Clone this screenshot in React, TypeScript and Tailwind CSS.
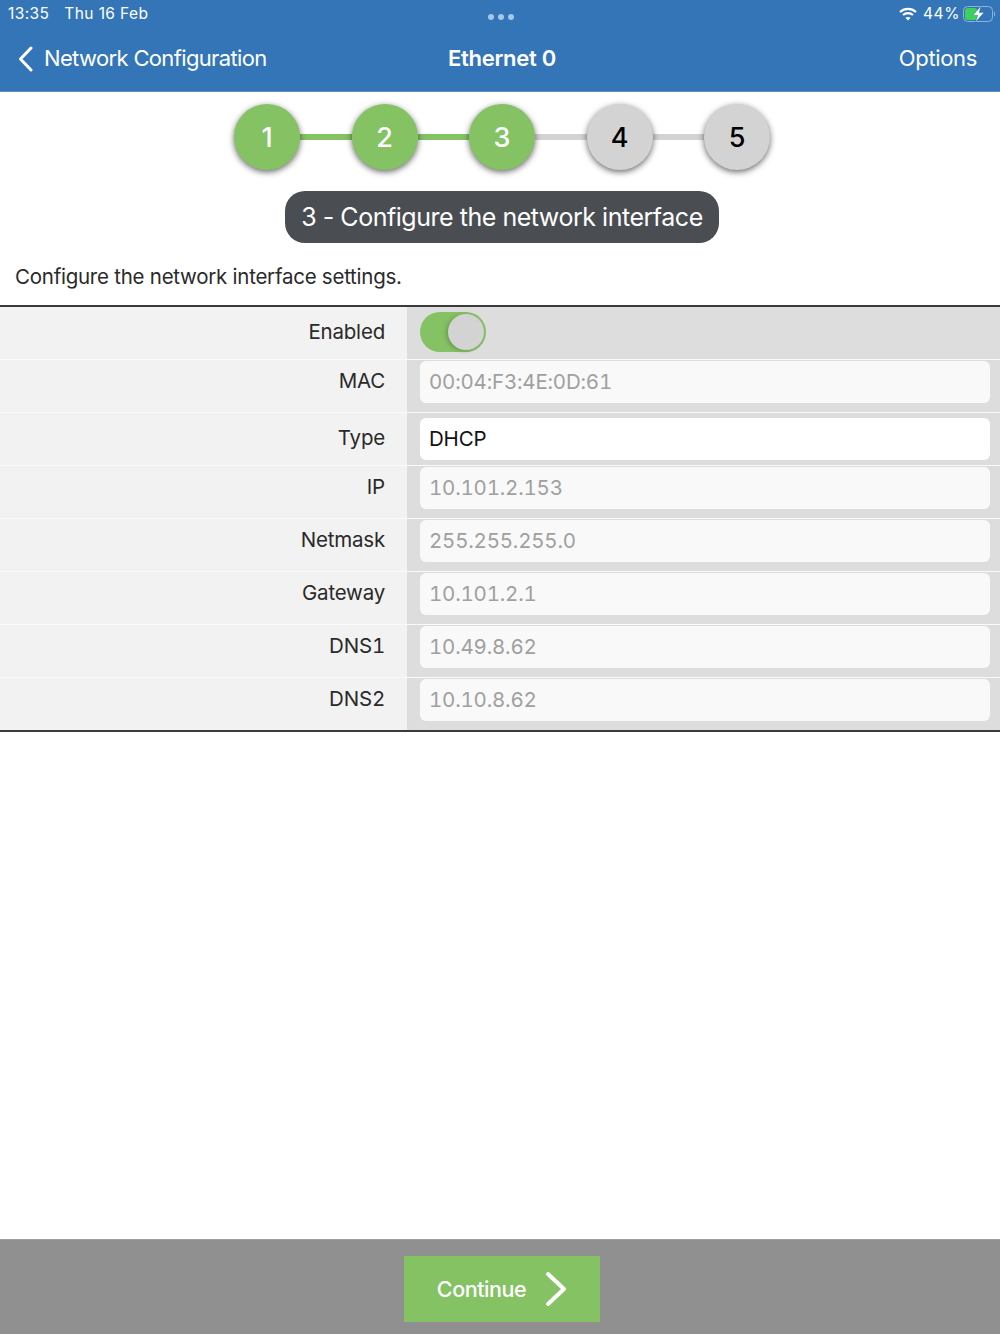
const steps = [
  { label: "1", done: true },
  { label: "2", done: true },
  { label: "3", done: true },
  { label: "4", done: false },
  { label: "5", done: false },
]

const rows = [
  { label: "MAC", value: "00:04:F3:4E:0D:61" },
  { label: "Type", value: "DHCP", editable: true },
  { label: "IP", value: "10.101.2.153" },
  { label: "Netmask", value: "255.255.255.0" },
  { label: "Gateway", value: "10.101.2.1" },
  { label: "DNS1", value: "10.49.8.62" },
  { label: "DNS2", value: "10.10.8.62" },
]

const StatusBar = () => (
  <div className="relative h-[27px] text-white">
    <div className="flex items-center pl-[8px] pt-[4px] text-[15.5px] leading-[20px] tracking-[0.4px]">
      <span>13:35</span>
      <span className="ml-[15px]">Thu 16 Feb</span>
    </div>
    <div className="absolute left-[488px] top-[14px] flex gap-[4px]">
      <span className="h-[6px] w-[6px] rounded-full bg-[#a4c8ec]" />
      <span className="h-[6px] w-[6px] rounded-full bg-[#a4c8ec]" />
      <span className="h-[6px] w-[6px] rounded-full bg-[#a4c8ec]" />
    </div>
    <div className="absolute right-[4px] top-[4px] flex items-center">
      <svg width="18" height="14" viewBox="0 0 18 14" fill="none" stroke="white" strokeWidth="2.2">
        <path d="M1 5 C5.5 0.8 12.5 0.8 17 5" />
        <path d="M4 8 C6.8 5.6 11.2 5.6 14 8" />
        <path d="M9 13.6 L6.4 10.8 C8 9.6 10 9.6 11.6 10.8 Z" fill="white" stroke="none" />
      </svg>
      <span className="ml-[6px] text-[15.5px] leading-[20px] tracking-[0.6px]">44%</span>
      <svg className="ml-[3px]" width="33" height="16" viewBox="0 0 33 16">
        <rect x="0.5" y="0.5" width="29" height="15" rx="4" fill="none" stroke="#8fb4d9" />
        <rect x="2" y="2" width="12" height="12" rx="2.5" fill="#3bd15a" />
        <path d="M31 5.5 C32.5 6 32.5 10 31 10.5 Z" fill="#8fb4d9" />
        <path d="M18 0 L10 9.2 L14.6 9.2 L12.6 16 L21 6.6 L16.2 6.6 Z" fill="white" stroke="#3375b7" strokeWidth="0.5" />
      </svg>
    </div>
  </div>
)

const NavBar = () => (
  <div className="relative flex h-[65px] items-center justify-between pb-[2px] pl-[18px] pr-[23px] text-[22px] text-white">
    <div className="flex items-center">
      <svg width="15" height="26" viewBox="0 0 15 26" fill="none" stroke="white" strokeWidth="3" strokeLinecap="round" strokeLinejoin="round">
        <path d="M13 2 L2.5 13 L13 24" />
      </svg>
      <span className="ml-[11px] tracking-[-0.65px]">Network Configuration</span>
    </div>
    <span className="absolute left-[4px] right-0 text-center font-semibold tracking-[-0.3px]">Ethernet 0</span>
    <span className="tracking-[-0.35px]">Options</span>
  </div>
)

const Stepper = () => (
  <div className="flex items-center justify-center pl-[4px] pt-[12px]">
    {steps.map((step, i) => (
      <div key={step.label} className="flex items-center">
        {i > 0 && (
          <div className={`h-[6px] w-[51.5px] ${steps[i].done ? "bg-[#84c264]" : "bg-[#d3d3d3]"}`} />
        )}
        <div
          className={`z-10 flex h-[66px] w-[66px] items-center justify-center rounded-full pt-[2px] text-[27px] font-medium shadow-[0_2px_6px_rgba(0,0,0,0.6)] ${
            step.done ? "bg-[#84c264] text-white" : "bg-[#d3d3d3] text-black"
          }`}
        >
          {step.label}
        </div>
      </div>
    ))}
  </div>
)

const Row = ({ label, value, editable }: { label: string; value: string; editable?: boolean }) => (
  <div className="flex h-[53px] border-t border-[#fafafa]">
    <div className={`w-[407px] bg-[#f2f2f2] pr-[22px] text-right text-[20.5px] tracking-[-0.2px] tabular-nums text-[#2a2a2a] ${editable ? "pt-[10px]" : "pt-[6px]"}`}>
      {label}
    </div>
    <div className={`flex-1 bg-[#dddddd] pl-[13px] pr-[10px] ${editable ? "pt-[5px]" : "pt-[1px]"}`}>
      <div
        className={`flex h-[42px] items-center rounded-[6px] pl-[9px] text-[20.5px] tracking-[-0.2px] tabular-nums ${
          editable ? "bg-white text-[#111]" : "bg-[#f9f9f9] text-[#a0a0a0]"
        }`}
      >
        {value}
      </div>
    </div>
  </div>
)

export default function App() {
  return (
    <div className="flex h-[1334px] flex-col bg-white font-['Inter',sans-serif]">
      <div className="h-[92px] border-b border-[#5f93c7] bg-[#3375b7]">
        <StatusBar />
        <NavBar />
      </div>

      <Stepper />

      <div className="mt-[21px] flex justify-center pl-[4px]">
        <div className="flex h-[52px] w-[434px] items-center justify-center rounded-[20px] bg-[#4a4d52] pt-[2px] text-[25px] tracking-[-0.47px] text-white">
          3 - Configure the network interface
        </div>
      </div>

      <p className="mt-[20px] pl-[15px] text-[20.5px] leading-[28px] tracking-[-0.25px] text-[#2a2a2a]">
        Configure the network interface settings.
      </p>

      <div className="mt-[14px] border-y-[2px] border-[#3a3a3a]">
        <div className="flex h-[52px]">
          <div className="w-[407px] bg-[#f2f2f2] pr-[22px] pt-[10px] text-right text-[20.5px] tracking-[-0.2px] text-[#2a2a2a]">
            Enabled
          </div>
          <div className="flex-1 bg-[#dddddd] pl-[13px] pt-[5px]">
            <div className="flex h-[40px] w-[66px] items-center justify-end rounded-full bg-[#84c264] pr-[2px]">
              <div className="h-[36px] w-[36px] rounded-full bg-[#d3d3d3] shadow-[-2px_1px_4px_rgba(0,0,0,0.2)]" />
            </div>
          </div>
        </div>
        {rows.map(row => (
          <Row key={row.label} {...row} />
        ))}
      </div>

      <div className="mt-auto flex h-[95px] items-start justify-center border-t border-[#a0a0a0] bg-[#909090] pl-[4px] pt-[16px]">
        <button className="flex h-[66px] w-[196px] items-center justify-center bg-[#84c264] text-[21.5px] font-medium tracking-[-0.45px] text-white">
          <span>Continue</span>
          <svg className="ml-[19px]" width="22" height="36" viewBox="0 0 22 36" fill="none" stroke="white" strokeWidth="4" strokeLinecap="round" strokeLinejoin="round">
            <path d="M3 3 L19 18 L3 33" />
          </svg>
        </button>
      </div>
    </div>
  )
}
